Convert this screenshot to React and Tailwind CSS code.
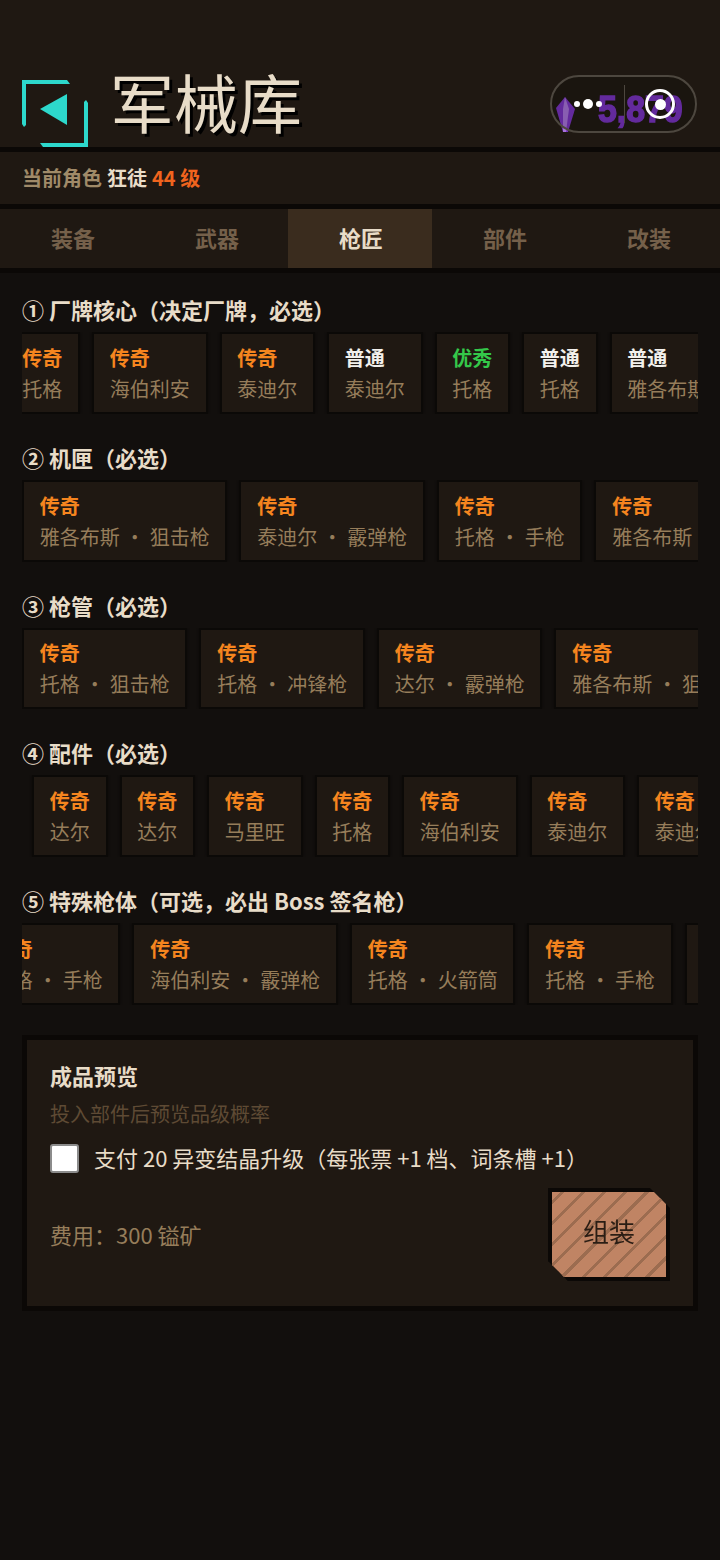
import React from 'react'

const LEGEND = 'text-[#f5851f]'
const COMMON = 'text-[#f2f0ec]'
const GOOD = 'text-[#34c84a]'

const rows = [
    {
        title: '① 厂牌核心（决定厂牌，必选）',
        offset: 'ml-[-17.5px]',
        cards: [
            [LEGEND, '传奇', '托格'],
            [LEGEND, '传奇', '海伯利安'],
            [LEGEND, '传奇', '泰迪尔'],
            [COMMON, '普通', '泰迪尔'],
            [GOOD, '优秀', '托格'],
            [COMMON, '普通', '托格'],
            [COMMON, '普通', '雅各布斯'],
        ],
    },
    {
        title: '② 机匣（必选）',
        offset: 'ml-0',
        cards: [
            [LEGEND, '传奇', '雅各布斯 · 狙击枪'],
            [LEGEND, '传奇', '泰迪尔 · 霰弹枪'],
            [LEGEND, '传奇', '托格 · 手枪'],
            [LEGEND, '传奇', '雅各布斯 · 冲锋枪'],
        ],
    },
    {
        title: '③ 枪管（必选）',
        offset: 'ml-0',
        cards: [
            [LEGEND, '传奇', '托格 · 狙击枪'],
            [LEGEND, '传奇', '托格 · 冲锋枪'],
            [LEGEND, '传奇', '达尔 · 霰弹枪'],
            [LEGEND, '传奇', '雅各布斯 · 狙击枪'],
        ],
    },
    {
        title: '④ 配件（必选）',
        offset: 'ml-[10px]',
        cards: [
            [LEGEND, '传奇', '达尔'],
            [LEGEND, '传奇', '达尔'],
            [LEGEND, '传奇', '马里旺'],
            [LEGEND, '传奇', '托格'],
            [LEGEND, '传奇', '海伯利安'],
            [LEGEND, '传奇', '泰迪尔'],
            [LEGEND, '传奇', '泰迪尔'],
        ],
    },
    {
        title: '⑤ 特殊枪体（可选，必出 Boss 签名枪）',
        offset: 'ml-[-47px]',
        cards: [
            [LEGEND, '传奇', '托格 · 手枪'],
            [LEGEND, '传奇', '海伯利安 · 霰弹枪'],
            [LEGEND, '传奇', '托格 · 火箭筒'],
            [LEGEND, '传奇', '托格 · 手枪'],
            [LEGEND, '传奇', '托格 · 手枪'],
        ],
    },
]

const tabs = ['装备', '武器', '枪匠', '部件', '改装']

const BackIcon = () => (
    <svg width="66" height="67" viewBox="0 0 66 67" className="shrink-0">
        <path d="M0 0H45L48 4H4V45L2 47L0 44Z" fill="#2dd8cc" />
        <path d="M66 67H21L18 63H62V22L64 20L66 23Z" fill="#2dd8cc" />
        <path d="M18 29L45 14V45Z" fill="#2dd8cc" />
    </svg>
)

const Crystal = () => (
    <svg width="24" height="40" viewBox="0 0 24 40" className="absolute left-[554px] top-[94px]">
        <path d="M11 3L21 15L14 38H9L2 14Z" fill="#7a33c4" />
        <path d="M11 3L15 15L12 38H9L9 15Z" fill="#a873dc" />
    </svg>
)

const Card = ({ color, grade, name }) => (
    <div className="shrink-0 border-2 border-[#0b0907] bg-[#1f1812] px-[15.75px] py-[7.9px] shadow-[0_0_2px_#0b0907]">
        <div className={`text-[20px] font-bold leading-[31px] whitespace-nowrap ${color}`}>{grade}</div>
        <div className="text-[20px] leading-[31px] whitespace-nowrap text-[#967d5a] [word-spacing:0.5px]">{name}</div>
    </div>
)

const Section = ({ row }) => (
    <section className="mb-[30px]">
        <h3 className="mb-[10px] text-[22px] font-bold leading-[26px] text-[#e8dcc8]">{row.title}</h3>
        <div className="overflow-hidden">
            <div className={`flex gap-3 ${row.offset}`}>
                {row.cards.map((c, i) => (
                    <Card key={i} color={c[0]} grade={c[1]} name={c[2]} />
                ))}
            </div>
        </div>
    </section>
)

export default function App() {
    return (
        <div className="relative min-h-[1560px] w-[720px] overflow-hidden bg-[#120f0d] font-['Noto_Sans_CJK_SC','Noto_Sans',sans-serif]">
            <header className="flex h-[152px] items-end gap-[22px] border-b-[5px] border-[#0b0806] bg-[#1f1812] pl-[22px]">
                <BackIcon />
                <h1 className="mb-[3px] text-[64px] font-normal leading-[88px] text-[#e8dcc8] [text-shadow:3px_3px_0_#000]">军械库</h1>
            </header>

            <div className="flex h-[57px] items-center border-b-[5px] border-[#0b0806] bg-[#1f1812] px-[22px] text-[20px] font-bold">
                <span className="text-[#a08a68]">当前角色</span>
                <span className="ml-[5px] text-[#e8dcc8]">狂徒</span>
                <span className="ml-[5px] text-[#f0641e]">44 级</span>
            </div>

            <nav className="grid h-[64px] grid-cols-5 border-b-[5px] border-[#0b0806] bg-[#1f1812]">
                {tabs.map((t) => (
                    <div
                        key={t}
                        className={
                            t === '枪匠'
                                ? 'flex items-center justify-center bg-[#3a2c1e] pb-[2px] pl-[2px] text-[22px] font-bold text-[#e8dcc8]'
                                : 'flex items-center justify-center pb-[2px] pl-[2px] text-[22px] font-bold text-[#75604a]'
                        }
                    >
                        {t}
                    </div>
                ))}
            </nav>

            <main className="px-[22px] pt-[23px]">
                {rows.map((r) => (
                    <Section key={r.title} row={r} />
                ))}

                <div className="h-[276px] border-[5px] border-[#0b0806] bg-[#1f1812] px-[23px] pt-[17px]">
                    <h3 className="text-[22px] font-bold leading-[36px] text-[#e8dcc8]">成品预览</h3>
                    <p className="mt-[3px] text-[20px] leading-[36px] text-[#5e4a34]">投入部件后预览品级概率</p>
                    <label className="mt-[9px] flex items-center gap-[15px]">
                        <span className="h-[29px] w-[29px] shrink-0 rounded-[3px] border-2 border-[#8c8c8c] bg-white" />
                        <span className="pb-[4px] text-[22px] leading-[32px] text-[#e8dcc8]">支付 20 异变结晶升级（每张票 +1 档、词条槽 +1）</span>
                    </label>
                    <div className="mt-[15px] flex items-center justify-between pr-[4px]">
                        <span className="text-[22px] text-[#967d5a]">费用：300 镒矿</span>
                        <div className="[filter:drop-shadow(-4px_-4px_0_#0b0806)_drop-shadow(4px_4px_0_#0b0806)]">
                            <button className="block h-[85px] w-[114px] bg-[#c08464] bg-[repeating-linear-gradient(-45deg,transparent_0,transparent_12px,#9c6c50_12px,#9c6c50_15px)] pb-[8px] text-[26px] text-[#2a1d14] [clip-path:polygon(0_0,calc(100%-12px)_0,100%_12px,100%_100%,12px_100%,0_calc(100%-12px))]">
                                组装
                            </button>
                        </div>
                    </div>
                </div>
            </main>

            {/* crystal balance sits under the capsule */}
            <Crystal />
            <div className="absolute left-[598px] top-[87px] origin-left scale-x-[0.94] font-['Liberation_Sans',sans-serif] text-[36px] font-bold leading-[46px] text-[#7a33c4] [-webkit-text-stroke:1.5px_#7a33c4]">
                5,879
            </div>

            {/* capsule overlay */}
            <div className="absolute left-[550px] top-[75px] flex h-[58px] w-[147px] items-center rounded-full border-2 border-[#4d473f] bg-[#0b080633]">
                <div className="flex w-[72px] items-center justify-center gap-[3px]">
                    <span className="h-[6px] w-[6px] rounded-full bg-white" />
                    <span className="h-[10px] w-[10px] rounded-full bg-white" />
                    <span className="h-[6px] w-[6px] rounded-full bg-white" />
                </div>
                <span className="h-[38px] w-px bg-[#4d473f]" />
                <div className="flex flex-1 items-center justify-center">
                    <span className="flex h-[30px] w-[30px] items-center justify-center rounded-full border-[3px] border-white">
                        <span className="h-[11px] w-[11px] rounded-full bg-white" />
                    </span>
                </div>
            </div>
        </div>
    )
}
